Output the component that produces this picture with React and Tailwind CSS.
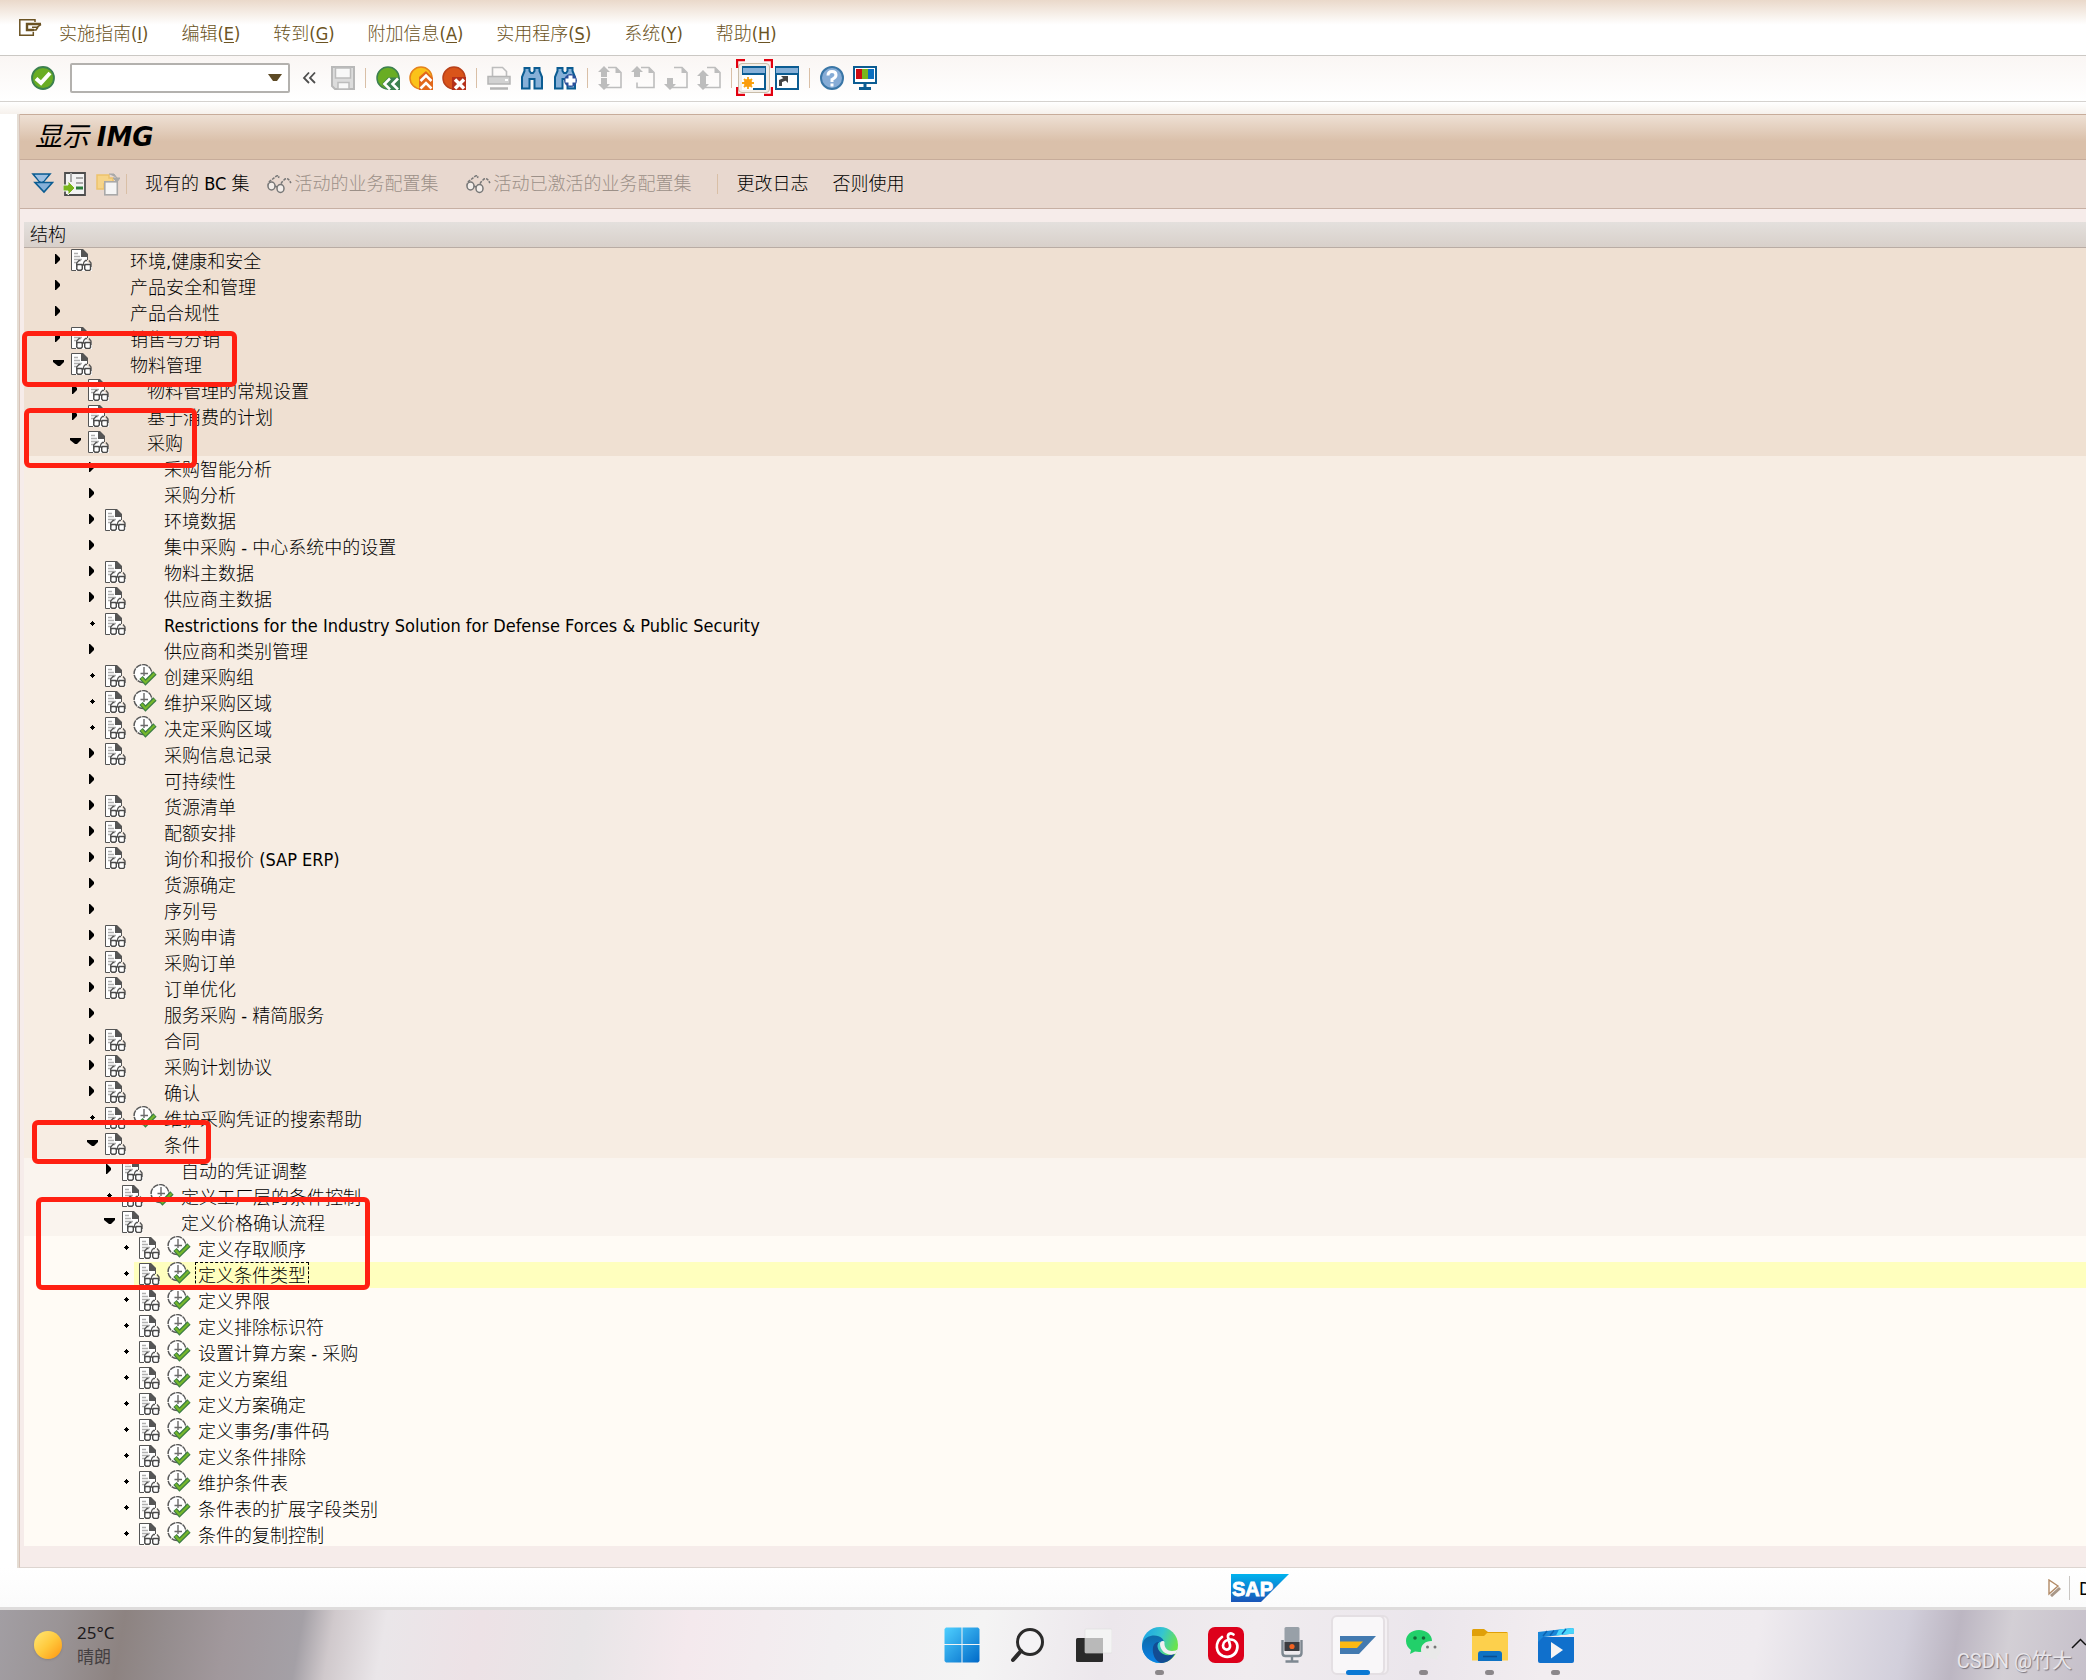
const MENUS = [
  ['实施指南', 'I'],
  ['编辑', 'E'],
  ['转到', 'G'],
  ['附加信息', 'A'],
  ['实用程序', 'S'],
  ['系统', 'Y'],
  ['帮助', 'H'],
]

// kind: 'closed' | 'open' | 'leaf'
const NODES = [
  { level: 0, kind: 'closed', doc: true, label: '环境,健康和安全' },
  { level: 0, kind: 'closed', label: '产品安全和管理' },
  { level: 0, kind: 'closed', label: '产品合规性' },
  { level: 0, kind: 'closed', doc: true, label: '销售与分销' },
  { level: 0, kind: 'open', doc: true, label: '物料管理' },
  { level: 1, kind: 'closed', doc: true, label: '物料管理的常规设置' },
  { level: 1, kind: 'closed', doc: true, label: '基于消费的计划' },
  { level: 1, kind: 'open', doc: true, label: '采购' },
  { level: 2, kind: 'closed', label: '采购智能分析' },
  { level: 2, kind: 'closed', label: '采购分析' },
  { level: 2, kind: 'closed', doc: true, label: '环境数据' },
  { level: 2, kind: 'closed', label: '集中采购 - 中心系统中的设置' },
  { level: 2, kind: 'closed', doc: true, label: '物料主数据' },
  { level: 2, kind: 'closed', doc: true, label: '供应商主数据' },
  { level: 2, kind: 'leaf', doc: true, label: 'Restrictions for the Industry Solution for Defense Forces & Public Security' },
  { level: 2, kind: 'closed', label: '供应商和类别管理' },
  { level: 2, kind: 'leaf', doc: true, exec: true, label: '创建采购组' },
  { level: 2, kind: 'leaf', doc: true, exec: true, label: '维护采购区域' },
  { level: 2, kind: 'leaf', doc: true, exec: true, label: '决定采购区域' },
  { level: 2, kind: 'closed', doc: true, label: '采购信息记录' },
  { level: 2, kind: 'closed', label: '可持续性' },
  { level: 2, kind: 'closed', doc: true, label: '货源清单' },
  { level: 2, kind: 'closed', doc: true, label: '配额安排' },
  { level: 2, kind: 'closed', doc: true, label: '询价和报价 (SAP ERP)' },
  { level: 2, kind: 'closed', label: '货源确定' },
  { level: 2, kind: 'closed', label: '序列号' },
  { level: 2, kind: 'closed', doc: true, label: '采购申请' },
  { level: 2, kind: 'closed', doc: true, label: '采购订单' },
  { level: 2, kind: 'closed', doc: true, label: '订单优化' },
  { level: 2, kind: 'closed', label: '服务采购 - 精简服务' },
  { level: 2, kind: 'closed', doc: true, label: '合同' },
  { level: 2, kind: 'closed', doc: true, label: '采购计划协议' },
  { level: 2, kind: 'closed', doc: true, label: '确认' },
  { level: 2, kind: 'leaf', doc: true, exec: true, label: '维护采购凭证的搜索帮助' },
  { level: 2, kind: 'open', doc: true, label: '条件' },
  { level: 3, kind: 'closed', doc: true, label: '自动的凭证调整' },
  { level: 3, kind: 'leaf', doc: true, exec: true, label: '定义工厂层的条件控制' },
  { level: 3, kind: 'open', doc: true, label: '定义价格确认流程' },
  { level: 4, kind: 'leaf', doc: true, exec: true, label: '定义存取顺序' },
  { level: 4, kind: 'leaf', doc: true, exec: true, label: '定义条件类型', selected: true },
  { level: 4, kind: 'leaf', doc: true, exec: true, label: '定义界限' },
  { level: 4, kind: 'leaf', doc: true, exec: true, label: '定义排除标识符' },
  { level: 4, kind: 'leaf', doc: true, exec: true, label: '设置计算方案 - 采购' },
  { level: 4, kind: 'leaf', doc: true, exec: true, label: '定义方案组' },
  { level: 4, kind: 'leaf', doc: true, exec: true, label: '定义方案确定' },
  { level: 4, kind: 'leaf', doc: true, exec: true, label: '定义事务/事件码' },
  { level: 4, kind: 'leaf', doc: true, exec: true, label: '定义条件排除' },
  { level: 4, kind: 'leaf', doc: true, exec: true, label: '维护条件表' },
  { level: 4, kind: 'leaf', doc: true, exec: true, label: '条件表的扩展字段类别' },
  { level: 4, kind: 'leaf', doc: true, exec: true, label: '条件的复制控制' },
]

const LEVEL_STYLE = [
  'pl-[26px] bg-[#efe0d2]',
  'pl-[43px] bg-[#efe0d2]',
  'pl-[60px] bg-[#f7ede3]',
  'pl-[77px] bg-[#faf4ee]',
  'pl-[94px] bg-[#fffbf5]',
]

// red marker frames laid over the tree
const MARKS = [
  '-left-[2px] top-[83px] w-[215px] h-[56px]',
  'left-0 top-[160px] w-[173px] h-[60px]',
  'left-[8px] top-[872px] w-[179px] h-[44px]',
  'left-[12px] top-[949px] w-[334px] h-[93px]',
]

function Marker({ kind }) {
  return (
    <svg width="16" height="22" viewBox="0 0 16 22" className="shrink-0">
      {kind === 'closed' && <path d="M5 6h1l4 4v2l-4 4H5z" fill="#000" />}
      {kind === 'open' && <path d="M3 8h11v2l-4 4H8L3 10z" fill="#000" />}
      {kind === 'leaf' && <path d="M8 9h1v1h1v1h1v1h-1v1h-1v1H8v-1H7v-1H6v-1h1v-1h1z" fill="#000" />}
    </svg>
  )
}

function DocIcon() {
  return (
    <svg width="21" height="22" viewBox="0 0 21 22" className="shrink-0">
      <path d="M0 0h10l6 6v7l5 3v6H0z" fill="#fff" />
      <path d="M5 21.500H.5V.5h10" fill="none" stroke="#555" />
      <path d="M10 0h2l5 5v3h-7z" fill="#555" />
      <path d="M16.500 8v3" stroke="#555" />
      <path d="M3 4.500h4M3 7.500h6M3 10.500h8M3 13.500h3" stroke="#b0b0b0" strokeWidth="1.600" />
      <path d="M5.700 18v-4l2.300-2.500h1.500M12 16l1-3 1.500-1.500H16M20 18v-4l-2-2.500" fill="none" stroke="#555" strokeWidth="1.300" />
      <path d="M6 15.500h4.500l.8 1v3.500l-1.300 1.300H7L5.700 20zM14.500 15.500h5v5l-1 1H15L13.700 20v-3.500z" fill="#fff" stroke="#4a4a4a" strokeWidth="1.400" />
      <path d="M11 16.500q1.200-1.500 3 0" fill="none" stroke="#4a4a4a" strokeWidth="1.400" />
    </svg>
  )
}

function ExecIcon() {
  return (
    <svg width="24" height="22" viewBox="0 0 24 22" className="shrink-0">
      <circle cx="10" cy="9.500" r="8.900" fill="#fff" stroke="#5a5a5a" strokeWidth="1.500" strokeDasharray="6 0.800" />
      <path d="M11 3v9M7.500 9.500H15" stroke="#6a6a6a" strokeWidth="1.400" fill="none" />
      <path d="M8 13.500l4.500 5L22 9" fill="none" stroke="#3d7d45" strokeWidth="4.600" />
      <path d="M8.500 14l4 4.500L21.500 9.500" fill="none" stroke="#76b82a" strokeWidth="2.200" />
    </svg>
  )
}

function TreeRow({ node }) {
  return (
    <li className={`flex h-[26px] items-stretch last:h-6 ${LEVEL_STYLE[node.level]}`}>
      <span className="flex w-4 shrink-0">
        <Marker kind={node.kind} />
      </span>
      <div className={`flex flex-1 items-start pl-[5px] ${node.selected ? 'bg-[#ffffbe]' : ''}`}>
        <span className="w-7 shrink-0 pt-px">{node.doc && <DocIcon />}</span>
        <span className="w-7 shrink-0">{node.exec && <ExecIcon />}</span>
        <button
          className={`whitespace-nowrap border px-[2px] pt-[2px] text-left leading-[22px] ${
            node.selected ? 'border-dashed border-black' : 'border-transparent'
          }`}
        >
          {node.label}
        </button>
      </div>
    </li>
  )
}

function Sep() {
  return <span className="mx-px h-5 w-px shrink-0 bg-[#d9bfa6]" />
}

function Svg({ children }) {
  return (
    <svg width="24" height="24" viewBox="0 0 24 24" className="block">
      {children}
    </svg>
  )
}

function IconButton({ label, children }) {
  return (
    <button aria-label={label} className="h-6 w-6 shrink-0">
      <Svg>{children}</Svg>
    </button>
  )
}

function Page({ up, down, upY = 0 }) {
  return (
    <>
      <path d="M10 1.500h8l5 5v15H6v-5" fill="none" stroke="#bdbdbd" strokeWidth="1.600" />
      <path d="M17.500 1v6H23z" fill="#bdbdbd" />
      {up && <path d={upY ? 'M6 4l6 6H9v5H3v-5H0z' : 'M6 0l6 6H9v5H3V6H0z'} fill="#bdbdbd" />}
      {down && <path d="M6 24l6-6H9v-6H3v6H0z" fill="#bdbdbd" />}
    </>
  )
}

function Binoculars() {
  return (
    <path
      d="M4.500 2h5v3l1.500 2h2l1.500-2V2h5v3l2.500 6v11.500h-7.500V13h-5v9.500H2V11l2.500-6z"
      fill="#86b0d8"
      stroke="#0b5c92"
      strokeWidth="2"
    />
  )
}

function WindowFrame() {
  return (
    <>
      <rect x="1" y="1" width="22" height="22" fill="#fff" stroke="#0b5c92" strokeWidth="2" />
      <rect x="1" y="2" width="22" height="5" fill="#86b0d8" />
      <path d="M0 1h24M0 8h24" stroke="#0b5c92" strokeWidth="2" />
    </>
  )
}

function MenuBar() {
  return (
    <nav className="flex h-14 items-center gap-[33px] border-b border-[#cbc8c4] bg-linear-to-b from-[#ead9ca] via-white via-45% to-white pl-[19px] text-[#6b5323]">
      <button aria-label="System" className="-mr-4">
        <svg width="23" height="17" viewBox="0 0 23 17">
          <path d="M16 3V.8H.8v15.400h13.500V13" fill="none" stroke="#6b5323" strokeWidth="1.500" />
          <path d="M22 5H8v6h7" fill="none" stroke="#6b5323" strokeWidth="2.400" />
          <path d="M13 8.300h5l4-3M14 11h3l2-3" fill="none" stroke="#6b5323" strokeWidth="1.600" />
        </svg>
      </button>
      {MENUS.map(([name, key]) => (
        <button key={key} className="whitespace-nowrap pt-3">
          {name}(<span className="underline underline-offset-2">{key}</span>)
        </button>
      ))}
    </nav>
  )
}

function StandardToolbar() {
  return (
    <div className="flex h-[46px] items-center gap-[9px] border-b border-[#d5d2cf] bg-linear-to-b from-[#faf6f4] to-white pb-[2px] pl-[31px]">
      <IconButton label="Enter">
        <circle cx="12" cy="12" r="11" fill="#69ad24" stroke="#3c8050" strokeWidth="1.800" />
        <path d="M5 12.500l5 4.500 9-10" fill="none" stroke="#fff" strokeWidth="4" />
      </IconButton>
      <div className="relative ml-[6px] w-[220px] shrink-0">
        <input
          aria-label="Command"
          className="block h-[30px] w-full rounded-xs border-2 border-[#b3b1ae] bg-white px-2 outline-none"
        />
        <svg width="14" height="8" viewBox="0 0 14 8" className="absolute right-2 top-[11px]">
          <path d="M0 0h14L9 7H5z" fill="#5d4a25" />
        </svg>
      </div>
      <button aria-label="Collapse" className="ml-[3px] mr-[6px] shrink-0">
        <svg width="14" height="14" viewBox="0 0 14 14">
          <path d="M7 1.500L2 7l5 5M13 1.500L8 7l5 5" fill="none" stroke="#4d4d4d" strokeWidth="1.800" />
        </svg>
      </button>
      <IconButton label="Save">
        <path d="M1 1h22v22H4l-3-3z" fill="#dcdcdc" stroke="#b8b8b8" strokeWidth="2" />
        <path d="M4.500 2h15v10h-15zM7 16.500h11V23H7z" fill="#f8f8f8" stroke="#bcbcbc" strokeWidth="1.500" />
      </IconButton>
      <Sep />
      <IconButton label="Back">
        <circle cx="12" cy="12" r="11" fill="#69ad24" stroke="#3c8050" strokeWidth="1.500" />
        <path d="M6 18l6-6.500h12V24H12z" fill="#3c8050" />
        <path d="M14 12.500L8.500 18l5.500 5.500M22 12.500L16.500 18l5.500 5.500" fill="none" stroke="#fff" strokeWidth="2.600" />
      </IconButton>
      <IconButton label="Exit">
        <circle cx="12" cy="12" r="11" fill="#fbc219" stroke="#e5821c" strokeWidth="1.500" />
        <path d="M17 5l7 7v12H10V11z" fill="#e2681b" />
        <path d="M11.500 15L17 9.500l5.500 5.500M11.500 22.500L17 17l5.500 5.500" fill="none" stroke="#fff" strokeWidth="2.600" />
      </IconButton>
      <IconButton label="Cancel">
        <circle cx="12" cy="12" r="11" fill="#d9541a" stroke="#b8401a" strokeWidth="1.500" />
        <path d="M10 11h14v13H10z" fill="#b5301a" />
        <path d="M13 13.500l9 9M22 13.500l-9 9" stroke="#fff" strokeWidth="3.400" />
      </IconButton>
      <Sep />
      <IconButton label="Print">
        <path d="M5.500 10V1.500h10l4 4V10" fill="none" stroke="#bdbdbd" strokeWidth="1.600" />
        <rect x="1" y="10.500" width="22" height="7.500" fill="#d2d2d2" stroke="#b5b5b5" strokeWidth="1.500" />
        <path d="M3 22.500h18" stroke="#b5b5b5" strokeWidth="2.500" />
        <path d="M18 14h3" stroke="#fff" strokeWidth="2" />
      </IconButton>
      <IconButton label="Find">
        <Binoculars />
      </IconButton>
      <IconButton label="Find next">
        <Binoculars />
        <circle cx="17.500" cy="14.500" r="6.500" fill="#2b4f9b" />
        <path d="M17.500 9.500v10M12.500 14.500h10" stroke="#fff" strokeWidth="4" />
      </IconButton>
      <Sep />
      <IconButton label="First page">
        <Page up down />
      </IconButton>
      <IconButton label="Previous page">
        <Page up />
      </IconButton>
      <IconButton label="Next page">
        <Page down />
      </IconButton>
      <IconButton label="Last page">
        <Page up upY={4} down />
      </IconButton>
      <Sep />
      <div className="relative h-6 w-6 shrink-0">
        <span className="absolute -inset-x-1 -inset-y-[3px] rounded-sm border border-[#c9bda9] bg-[#f4efe8]" />
        <svg width="37" height="37" viewBox="0 0 37 37" className="absolute -left-[6px] -top-[7px]">
          <path d="M1 9V1h8M28 1h8v8M36 28v8h-8M9 36H1v-8" fill="none" stroke="#e2000f" strokeWidth="2.400" />
        </svg>
        <div className="absolute inset-0">
          <IconButton label="New session">
            <WindowFrame />
            <path d="M0 9h11v15H0z" fill="#fff" />
            <path d="M6 11v12M0 17h12M2 13l8 8M10 13l-8 8" stroke="#f7a512" strokeWidth="1.800" />
            <circle cx="6" cy="17" r="4" fill="#fb9d0c" />
          </IconButton>
        </div>
      </div>
      <IconButton label="Shortcut">
        <WindowFrame />
        <path d="M5.500 20v-5l5-2" fill="none" stroke="#444" strokeWidth="3" />
        <path d="M6 10h7v7z" fill="#444" />
      </IconButton>
      <Sep />
      <IconButton label="Help">
        <circle cx="12" cy="12" r="11" fill="#86acd6" stroke="#3a76a6" strokeWidth="2" />
        <path d="M8 9.500q0-4 4-4t4 3.500q0 2.500-4 4.500v2.500M12 17.500v3" fill="none" stroke="#fff" strokeWidth="3" />
      </IconButton>
      <IconButton label="Layout">
        <rect x="1" y="1" width="22" height="16" fill="#fff" stroke="#0b5c92" strokeWidth="2" />
        <path d="M3 3h6v10H3z" fill="#cc0a12" />
        <path d="M9 3h6v10H9z" fill="#79b51c" />
        <path d="M15 3h6v10h-6z" fill="#0a6fc0" />
        <path d="M12 17v5M6 22.500h12" stroke="#0b5c92" strokeWidth="3" />
      </IconButton>
    </div>
  )
}

function Glasses() {
  return (
    <svg width="25" height="20" viewBox="0 0 25 20" className="shrink-0">
      <path d="M1.500 12q-1-4 3-6l5-4q3-1 2 2M12 13l3-5 3-3q3-1 4 1l2 3" fill="none" stroke="#777" strokeWidth="1.500" strokeDasharray="3 1" />
      <ellipse cx="4.500" cy="12" rx="3.500" ry="4" fill="#f4eeea" stroke="#777" strokeWidth="1.500" />
      <ellipse cx="13.500" cy="14.500" rx="3.500" ry="4" fill="#f4eeea" stroke="#777" strokeWidth="1.500" />
      <path d="M8 12l2 1" stroke="#777" strokeWidth="1.500" />
    </svg>
  )
}

function AppToolbar() {
  return (
    <div className="flex h-[49px] items-center border-b border-[#c7b0a4] bg-[#e8d8cf] pl-[10px]">
      <div className="flex gap-[9px]">
        <IconButton label="Expand all">
          <path d="M3 2h17l-8.500 10z" fill="#86b0d8" stroke="#0b5c92" strokeWidth="1.600" />
          <path d="M5 10.500h17.500L14 20z" fill="#86b0d8" stroke="#0b5c92" strokeWidth="1.600" />
          <path d="M5 3h13l-4.500 6H9.500z" fill="#9dc0e2" />
        </IconButton>
        <IconButton label="Position">
          <path d="M2 1h20v22H2z" fill="#f3f3f3" stroke="#4d4d4d" strokeWidth="1.800" />
          <path d="M8 1v9M13 6h7M13 11h7" stroke="#a9a9a9" strokeWidth="2" />
          <path d="M13 16h7" stroke="#2b7d3c" strokeWidth="3" />
          <path d="M0 13h5V9l7 7-7 7v-4H0z" fill="#79b51c" stroke="#f3f3f3" />
        </IconButton>
        <IconButton label="Copy">
          <path d="M1 3h12v3h4v6H8v5H1z" fill="#f6d489" stroke="#edc26c" strokeWidth="1.500" />
          <rect x="8.800" y="9.800" width="12.500" height="13" fill="#f5f5f5" stroke="#a9a9a9" strokeWidth="1.600" />
          <path d="M13 2h5l3 4M17 6h7l-3 4z" fill="#a9a9a9" stroke="#a9a9a9" />
        </IconButton>
      </div>
      <span className="ml-[6px] h-5 w-px bg-[#d9bfa6]" />
      <button className="ml-[18px] whitespace-nowrap">现有的 BC 集</button>
      <button disabled className="ml-[18px] flex items-center gap-[2px] whitespace-nowrap text-[#9c9088]">
        <Glasses />
        活动的业务配置集
      </button>
      <button disabled className="ml-7 flex items-center gap-[2px] whitespace-nowrap text-[#9c9088]">
        <Glasses />
        活动已激活的业务配置集
      </button>
      <span className="ml-[26px] h-5 w-px bg-[#d9bfa6]" />
      <button className="ml-[18px] whitespace-nowrap">更改日志</button>
      <button className="ml-6 whitespace-nowrap">否则使用</button>
    </div>
  )
}

function StatusBar() {
  return (
    <div className="relative flex h-[42px] items-center overflow-hidden border-b-3 border-[#dedcdc] bg-linear-to-b from-white to-[#fbfbfb]">
      <svg width="58" height="28" viewBox="0 0 58 28" className="ml-[59%] shrink-0">
        <defs>
          <linearGradient id="sap" x2="0" y2="1">
            <stop offset="0" stopColor="#00b3ee" />
            <stop offset="1" stopColor="#1a55b8" />
          </linearGradient>
        </defs>
        <path d="M0 0h58L30 28H0z" fill="url(#sap)" />
        <text x="1" y="22" fill="#fff" fontFamily="Liberation Sans" fontWeight="700" fontSize="20" stroke="#fff" strokeWidth="0.800">
          SAP
        </text>
      </svg>
      <svg width="13" height="18" viewBox="0 0 13 18" className="ml-auto shrink-0">
        <path d="M3 17l9-8" stroke="#a99787" strokeWidth="3" />
        <path d="M1 1v14l9-8z" fill="#fff" stroke="#b28a66" strokeWidth="1.400" />
      </svg>
      <span className="ml-2 h-6 w-px shrink-0 bg-[#c9c6c3]" />
      <span className="ml-[9px] w-[7px] shrink-0 overflow-hidden pt-[2px]">D</span>
    </div>
  )
}

function Task({ label, dot, active, children }) {
  return (
    <button aria-label={label} className="relative flex h-[60px] w-[54px] shrink-0 items-center justify-center">
      {active && (
        <>
          <span className="absolute inset-y-0 left-1 -right-1 rounded-md border-2 border-[#e4dfe3] bg-[#f4f0f3]" />
          <span className="absolute inset-0 rounded-md border-2 border-[#e4dfe3] bg-[#f9f7f9]" />
        </>
      )}
      <svg width="36" height="36" viewBox="0 0 36 36" className="relative">
        {children}
      </svg>
      {dot && <span className="absolute bottom-0 h-[5px] w-[9px] rounded-full bg-[#8b878a]" />}
      {active && <span className="absolute bottom-0 h-[5px] w-6 rounded-full bg-[#0a78d4]" />}
    </button>
  )
}

function Taskbar() {
  return (
    <footer className="relative flex h-[70px] overflow-hidden bg-[linear-gradient(100deg,#a29ea3_0%,#9a9496_3%,#8d8381_6%,#948c8d_8%,#a1989c_11%,#a4a0a6_14.5%,#d0c9cc_16%,#eae6e9_18.500%,#ede2e6_23%,#e8e5e7_28%,#f4e9ed_33%,#f2eff1_40%,#f4f4f4_47%,#ece7ec_53%,#f0ecef_60%,#ebe6ec_68%,#f2edf0_74%,#efebef_84%,#d2cfdb_91%,#bcb6c2_93.500%,#d3cfd5_96%,#c6c0ca_100%)]">
      <div className="flex w-[44.8%] shrink-0 items-start pl-[34px] pt-[11px]">
        <span className="mt-[10px] h-7 w-7 rounded-full bg-linear-to-br from-[#ffe873] via-[#ffc93c] to-[#ff9400] shadow-sm" />
        <div className="ml-[15px] font-['Noto_Sans','Noto_Sans_CJK_SC',sans-serif] text-[17px] leading-6 font-normal">
          <p className="text-[#1d1a1c]">25°C</p>
          <p className="text-[#444042]">晴朗</p>
        </div>
      </div>
      <div className="flex gap-3 pt-[5px]">
        <Task label="Start">
          <defs>
            <linearGradient id="win" x2="1" y2="1">
              <stop offset="0" stopColor="#4fd0ff" />
              <stop offset="1" stopColor="#0069c8" />
            </linearGradient>
          </defs>
          <path d="M2 .5h15.500V17H.5V2zM18.500.5H34L35.500 2v15h-17zM.5 18h17v17.500H2L.5 34zM18.500 18h17v16L34 35.500H18.500z" fill="url(#win)" />
        </Task>
        <Task label="Search">
          <circle cx="20" cy="15" r="12.500" fill="#f4f3f5" stroke="#2b2b2b" strokeWidth="3" />
          <path d="M11 24l-8 9" stroke="#2b2b2b" strokeWidth="4" strokeLinecap="round" />
        </Task>
        <Task label="Task view">
          <rect x="0" y="11" width="27" height="24" rx="1.500" fill="#2a2a2a" />
          <rect x="9" y="2" width="27" height="24" rx="1" fill="#f4f4f4" stroke="#ddd" strokeWidth="0.600" />
          <path d="M9 11h18v15H9z" fill="#b9b9b9" />
        </Task>
        <Task label="Edge" dot>
          <defs>
            <linearGradient id="e1" x1="0" x2="1" y2="0.400">
              <stop offset="0" stopColor="#1aa0e8" />
              <stop offset=".55" stopColor="#35c5d0" />
              <stop offset="1" stopColor="#6be34c" />
            </linearGradient>
            <linearGradient id="e2" x2="0" y2="1">
              <stop offset="0" stopColor="#0e6aa8" />
              <stop offset="1" stopColor="#0a82e8" />
            </linearGradient>
          </defs>
          <circle cx="18" cy="18" r="18" fill="url(#e1)" />
          <path d="M0 19C1 10 8 8.500 12 8.500c7 0 10 4 10 7-4-3-9 2-7 8 2 7 9 9 14 7-3 3.500-7 5.500-11 5.500C8 36 0 28 0 19z" fill="url(#e2)" />
          <path d="M11 20c1-4 4-5.500 6-5-3 3-1.500 9 4 12 4 2 8 1.500 12-1-2 6-8 10-14 10-6-2-9-9-8-16z" fill="#134c93" />
          <path d="M18 17c0-3 4-4 4.500-1.500C22 19 24 24 30 24c3 0 5-1 6-2l-2 4.500C27 30 18 25 18 17z" fill="#f2eff2" />
        </Task>
        <Task label="Music">
          <rect width="36" height="36" rx="7" fill="#dd001b" />
          <path d="M25.500 7.500c-3-2.500-6-.5-5.500 2.500l2 8c1 6-7 6-7 .5 0-4 4-6 7.500-6 5.500 0 8 5 6.500 10-2 7-9 8.500-14 6.500-7-3-9-13-1-19" fill="none" stroke="#fff" strokeWidth="2.700" strokeLinecap="round" />
        </Task>
        <Task label="Recorder">
          <rect x="10.500" width="15" height="24" rx="1.500" fill="#98a0a8" />
          <rect x="10.500" y="15" width="15" height="9" fill="#3c3c40" />
          <circle cx="18" cy="19.500" r="2.600" fill="#f26322" />
          <path d="M8.500 13v13q0 3 3 3h13q3 0 3-3V13M18 29v5M11.500 34.500h13" fill="none" stroke="#7e8891" strokeWidth="2.400" />
        </Task>
        <Task label="SAP Logon" active>
          <path d="M0 9h36L19 27H0z" fill="#437ab0" />
          <path d="M0 14.500h23L17 21H0z" fill="#fdb913" />
        </Task>
        <Task label="WeChat" dot>
          <path d="M13 3C5 3 0 8 0 14c0 4 2 7 5 9l-1 4 5-2.500c10 2 17-3 17-10.500C26 8 21 3 13 3z" fill="#22d06a" />
          <circle cx="9" cy="11" r="1.800" fill="#146b38" />
          <circle cx="17.500" cy="11" r="1.800" fill="#146b38" />
          <path d="M25.500 14C19 14 15 18 15 23s5 9 11 8.500l6 1.500-1-3c7-5 5-16-5.500-16z" fill="#e9e9e9" />
          <circle cx="21.500" cy="20" r="1.500" fill="#777" />
          <circle cx="29" cy="20" r="1.500" fill="#777" />
        </Task>
        <Task label="Files" dot>
          <path d="M0 3.500Q0 2 1.500 2H12l4 3h18.500Q36 5 36 6.500V12H0z" fill="#e0a008" />
          <path d="M0 9h12l3-3h21v27.500H0z" fill="#fdd04c" />
          <path d="M6 34v-7q0-3 3-3h18q3 0 3 3v7z" fill="#0e72c4" />
          <path d="M11 29.500h14" stroke="#0b4f92" strokeWidth="1.500" />
        </Task>
        <Task label="Movies" dot>
          <path d="M0 5L34 1q2 0 2 2v3.500L6 10l-2 6H0z" fill="#1a86d8" />
          <path d="M21 2.500L34 1q2 0 2 2v3.500L18 8.500z" fill="#49d6fb" />
          <path d="M9 4l-4 5M16 3.500l-4 5M28 2l-4 5" stroke="#0e62b0" strokeWidth="1.400" />
          <path d="M0 15l5-5h31v24q0 2-2 2H2q-2 0-2-2z" fill="#1070cc" />
          <path d="M13 15l12 8-12 8.500z" fill="#f4f4f4" />
        </Task>
      </div>
      <svg width="15" height="12" viewBox="0 0 15 12" className="ml-auto mt-7 shrink-0">
        <path d="M1 10L9.500 1.500 15 7" fill="none" stroke="#111" strokeWidth="1.500" />
      </svg>
      <span className="absolute bottom-[5px] right-[14px] font-['Roboto','Noto_Sans_CJK_SC',sans-serif] text-xl leading-7 font-normal text-[#e9e6eb] [text-shadow:1px_1px_1px_#77727a]">
        CSDN @竹大
      </span>
    </footer>
  )
}

export default function App() {
  return (
    <div className="flex min-h-screen flex-col overflow-hidden bg-white font-['DejaVu_Sans_Condensed','Noto_Sans_CJK_SC',sans-serif] text-lg leading-6 font-light text-black">
      <MenuBar />
      <StandardToolbar />
      <div className="h-3 bg-linear-to-b from-white to-[#f6f1ec]" />
      <main className="ml-[17px] border-l-2 border-[#e5ddd4]">
        <section className="border-b border-l border-b-[#ddd5d0] border-l-[#d8c4b8] bg-[#f6ecea] pb-[21px]">
          <h1 className="flex h-[46px] items-center border-y border-[#c7ac9a] bg-linear-to-b from-[#eee0d4] to-[#dac0aa] to-60% pl-[15px] text-[27px] leading-8 font-normal italic">
            <span className="whitespace-pre">显示 </span>
            <span className="font-['DejaVu_Sans',sans-serif] text-[26px] font-bold">IMG</span>
          </h1>
          <AppToolbar />
          <div className="mt-[13px] pl-1">
            <h2 className="h-[26px] border-b border-[#b9aca4] bg-linear-to-b from-[#e4e0dd] to-[#d8d0ca] pl-[6px] leading-[26px]">结构</h2>
            <div className="relative">
              <ul>
                {NODES.map((node) => (
                  <TreeRow key={node.label} node={node} />
                ))}
              </ul>
              {MARKS.map((mark) => (
                <span key={mark} className={`pointer-events-none absolute rounded-md border-5 border-[#ff2012] ${mark}`} />
              ))}
            </div>
          </div>
        </section>
      </main>
      <StatusBar />
      <Taskbar />
    </div>
  )
}
